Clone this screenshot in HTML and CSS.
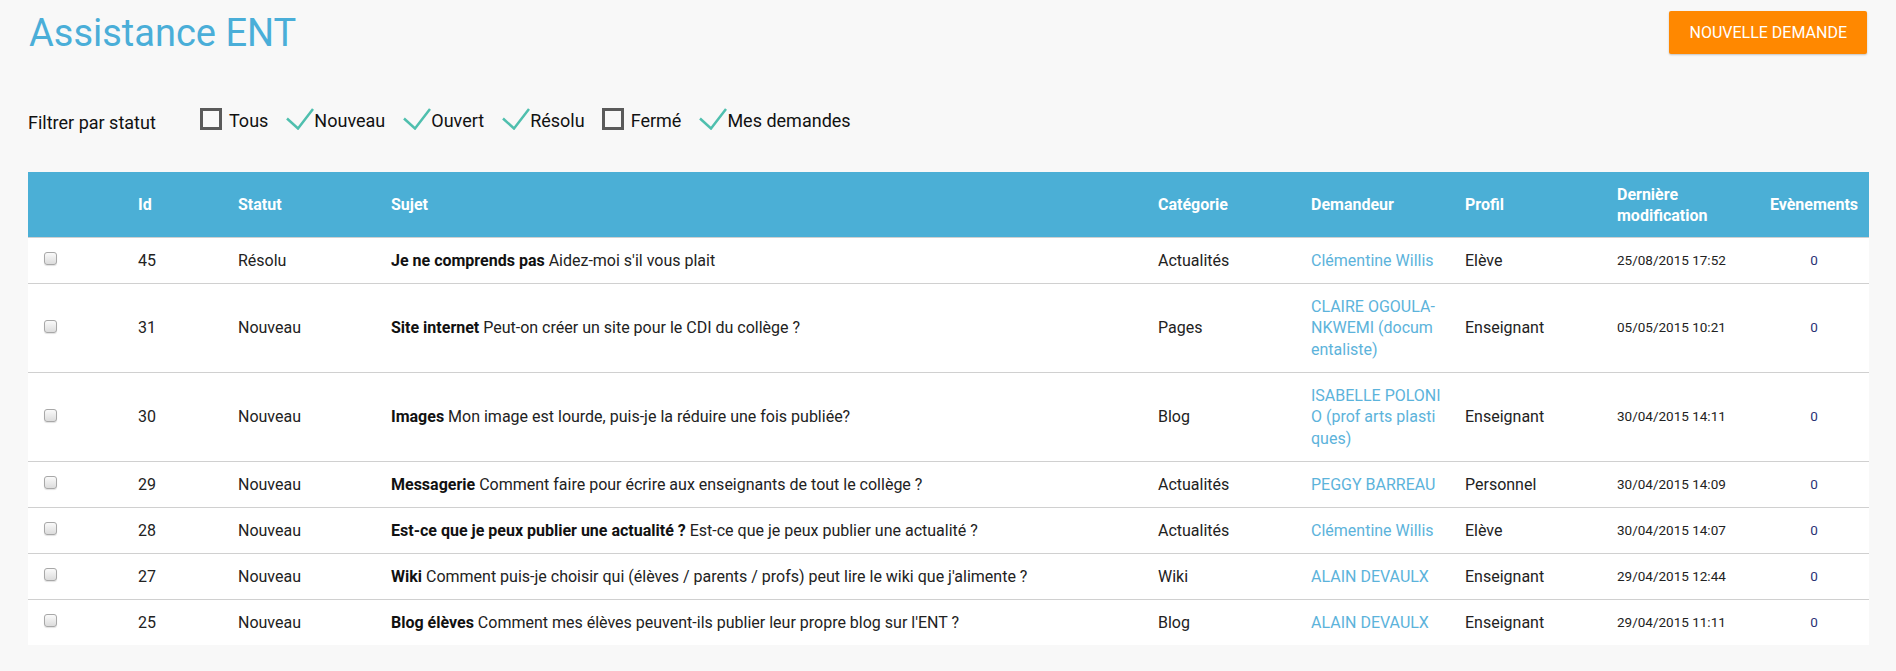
FILE: index.html
```html
<!DOCTYPE html>
<html lang="fr">
<head>
<meta charset="utf-8">
<title>Assistance ENT</title>
<link rel="stylesheet" href="styles.css">
</head>
<body>
<div class="page">
  <header class="top">
    <h1 class="title">Assistance ENT</h1>
    <button class="btn" type="button">Nouvelle demande</button>
  </header>

  <div class="filters">
    <span class="filters-label">Filtrer par statut</span>
    <ul class="filter-list">
      <li class="filter-item"><span class="box"></span><span>Tous</span></li>
      <li class="filter-item checked"><svg class="check" viewBox="0 0 28 22" width="28" height="22"><polyline points="1,10.5 12,20.5 27,1" /></svg><span>Nouveau</span></li>
      <li class="filter-item checked"><svg class="check" viewBox="0 0 28 22" width="28" height="22"><polyline points="1,10.5 12,20.5 27,1" /></svg><span>Ouvert</span></li>
      <li class="filter-item checked"><svg class="check" viewBox="0 0 28 22" width="28" height="22"><polyline points="1,10.5 12,20.5 27,1" /></svg><span>Résolu</span></li>
      <li class="filter-item"><span class="box"></span><span>Fermé</span></li>
      <li class="filter-item checked"><svg class="check" viewBox="0 0 28 22" width="28" height="22"><polyline points="1,10.5 12,20.5 27,1" /></svg><span>Mes demandes</span></li>
    </ul>
  </div>

  <table class="tickets">
    <colgroup>
      <col class="c-cb"><col class="c-id"><col class="c-status"><col class="c-subject"><col class="c-cat"><col class="c-owner"><col class="c-profile"><col class="c-date"><col class="c-events">
    </colgroup>
    <thead>
      <tr>
        <th></th><th>Id</th><th>Statut</th><th>Sujet</th><th>Catégorie</th><th>Demandeur</th><th>Profil</th><th>Dernière modification</th><th class="center">Evènements</th>
      </tr>
    </thead>
    <tbody>
      <tr>
        <td><span class="rowcb"></span></td><td>45</td><td>Résolu</td><td><b>Je ne comprends pas</b> Aidez-moi s'il vous plait</td><td>Actualités</td><td class="owner">Clémentine Willis</td><td>Elève</td><td class="date">25/08/2015 17:52</td><td class="events">0</td>
      </tr>
      <tr>
        <td><span class="rowcb"></span></td><td>31</td><td>Nouveau</td><td><b>Site internet</b> Peut-on créer un site pour le CDI du collège ?</td><td>Pages</td><td class="owner">CLAIRE OGOULA-NKWEMI (documentaliste)</td><td>Enseignant</td><td class="date">05/05/2015 10:21</td><td class="events">0</td>
      </tr>
      <tr>
        <td><span class="rowcb"></span></td><td>30</td><td>Nouveau</td><td><b>Images</b> Mon image est lourde, puis-je la réduire une fois publiée?</td><td>Blog</td><td class="owner">ISABELLE POLONIO (prof arts plastiques)</td><td>Enseignant</td><td class="date">30/04/2015 14:11</td><td class="events">0</td>
      </tr>
      <tr>
        <td><span class="rowcb"></span></td><td>29</td><td>Nouveau</td><td><b>Messagerie</b> Comment faire pour écrire aux enseignants de tout le collège ?</td><td>Actualités</td><td class="owner">PEGGY BARREAU</td><td>Personnel</td><td class="date">30/04/2015 14:09</td><td class="events">0</td>
      </tr>
      <tr>
        <td><span class="rowcb"></span></td><td>28</td><td>Nouveau</td><td><b>Est-ce que je peux publier une actualité ?</b> Est-ce que je peux publier une actualité ?</td><td>Actualités</td><td class="owner">Clémentine Willis</td><td>Elève</td><td class="date">30/04/2015 14:07</td><td class="events">0</td>
      </tr>
      <tr>
        <td><span class="rowcb"></span></td><td>27</td><td>Nouveau</td><td><b>Wiki</b> Comment puis-je choisir qui (élèves / parents / profs) peut lire le wiki que j'alimente ?</td><td>Wiki</td><td class="owner">ALAIN DEVAULX</td><td>Enseignant</td><td class="date">29/04/2015 12:44</td><td class="events">0</td>
      </tr>
      <tr>
        <td><span class="rowcb"></span></td><td>25</td><td>Nouveau</td><td><b>Blog élèves</b> Comment mes élèves peuvent-ils publier leur propre blog sur l'ENT ?</td><td>Blog</td><td class="owner">ALAIN DEVAULX</td><td>Enseignant</td><td class="date">29/04/2015 11:11</td><td class="events">0</td>
      </tr>
    </tbody>
  </table>
</div>
</body>
</html>
```

FILE: styles.css
```css
html, body {
  margin: 0;
  padding: 0;
}

body {
  background: #f8f8f8;
  font-family: Roboto, "Liberation Sans", Arial, sans-serif;
  color: #222;
}

.page {
  padding: 0 27px 0 28px;
}

.top {
  display: flex;
  justify-content: space-between;
  align-items: flex-start;
  padding-top: 11px;
}

.title {
  margin: 0 0 0 1px;
  font-size: 38px;
  line-height: 45px;
  font-weight: 400;
  color: #4aaed8;
}

.btn {
  margin: 0 2px 0 0;
  height: 43px;
  padding: 0 20px;
  border: none;
  border-radius: 2px;
  background: #ff8800;
  color: #fff;
  font-family: Roboto, "Liberation Sans", Arial, sans-serif;
  font-size: 16px;
  text-transform: uppercase;
  box-shadow: 0 1px 2px rgba(0, 0, 0, 0.22);
  cursor: pointer;
}

.filters {
  display: flex;
  align-items: flex-start;
  margin-top: 54px;
  font-size: 18px;
  line-height: 22px;
  color: #111;
}

.filters-label {
  margin-top: 2px;
  width: 172px;
  flex: none;
}

.filter-list {
  display: flex;
  gap: 17px;
  margin: 0;
  padding: 0;
  list-style: none;
}

.filter-item {
  display: flex;
  align-items: flex-start;
}

.box {
  width: 22px;
  height: 22px;
  margin: -2px 7px 0 0;
  box-sizing: border-box;
  border: 3px solid #5a5a5a;
}

.check {
  display: block;
  margin: -2px 0 0 1px;
  flex: none;
}

.check polyline {
  fill: none;
  stroke: #4fbfae;
  stroke-width: 2.5;
}

.tickets {
  width: 100%;
  margin-top: 38px;
  border-collapse: collapse;
  table-layout: fixed;
  background: #fff;
  font-size: 16px;
}

.c-cb { width: 98px; }
.c-id { width: 100px; }
.c-status { width: 153px; }
.c-subject { width: 767px; }
.c-cat { width: 153px; }
.c-owner { width: 154px; }
.c-profile { width: 152px; }
.c-date { width: 154px; }
.c-events { width: 110px; }

.tickets thead {
  border-bottom: 1px solid #d0d0d0;
}

.tickets th {
  background: #4bafd6;
  color: #fff;
  font-weight: 700;
  text-align: left;
  padding: 11.5px 12px;
  line-height: 21px;
  vertical-align: middle;
}

.tickets th.center {
  text-align: center;
  padding-left: 4px;
  padding-right: 4px;
}

.tickets tbody tr {
  border-bottom: 1px solid #d0d0d0;
}

.tickets tbody tr:last-child {
  border-bottom: none;
}

.tickets td {
  padding: 11.75px 12px;
  line-height: 21.5px;
  vertical-align: middle;
  color: #222;
}

.tickets td b {
  font-weight: 700;
  color: #111;
}

.rowcb {
  display: block;
  width: 11px;
  height: 11px;
  margin: 0 0 4px 4px;
  border: 1px solid #a8a8a8;
  border-radius: 3px;
  background: linear-gradient(#fafafa, #dcdcdc);
  box-shadow: 0 1px 1px rgba(0, 0, 0, 0.12);
}

.tickets td.owner {
  color: #5cb3db;
  word-break: break-all;
}

.tickets td.date {
  font-size: 13.5px;
}

.tickets td.events {
  text-align: center;
  font-size: 13.5px;
  color: #2a3275;
  padding-left: 4px;
  padding-right: 4px;
}
```
